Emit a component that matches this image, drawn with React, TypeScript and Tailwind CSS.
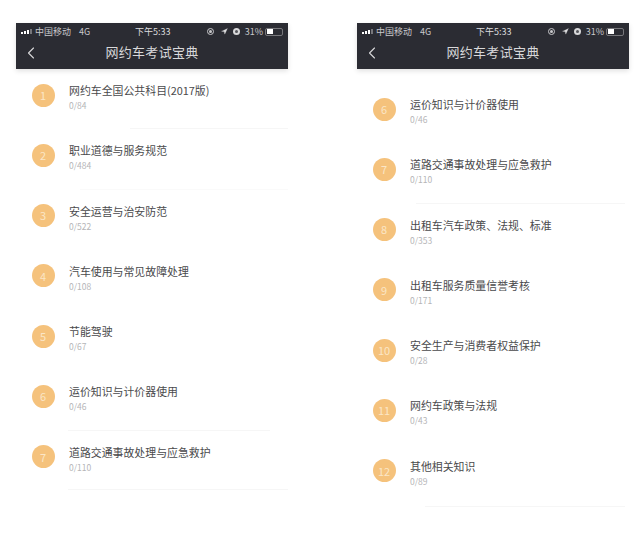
import { ChevronLeft, Navigation } from "lucide-react";

type Item = { no: number; title: string; count: string; divider?: string };

const leftItems: Item[] = [
  { no: 1, title: "网约车全国公共科目(2017版)", count: "0/84", divider: "left-[114px] bottom-[13px]" },
  { no: 2, title: "职业道德与服务规范", count: "0/484", divider: "left-[64px] bottom-[13px] opacity-60" },
  { no: 3, title: "安全运营与治安防范", count: "0/522" },
  { no: 4, title: "汽车使用与常见故障处理", count: "0/108" },
  { no: 5, title: "节能驾驶", count: "0/67" },
  { no: 6, title: "运价知识与计价器使用", count: "0/46", divider: "left-[52px] right-[18px] bottom-[13px]" },
  { no: 7, title: "道路交通事故处理与应急救护", count: "0/110", divider: "left-[52px] bottom-[14px]" },
];

const rightItems: Item[] = [
  { no: 6, title: "运价知识与计价器使用", count: "0/46" },
  { no: 7, title: "道路交通事故处理与应急救护", count: "0/110", divider: "left-[59px] right-[4px] bottom-[13px]" },
  { no: 8, title: "出租车汽车政策、法规、标准", count: "0/353" },
  { no: 9, title: "出租车服务质量信誉考核", count: "0/171" },
  { no: 10, title: "安全生产与消费者权益保护", count: "0/28" },
  { no: 11, title: "网约车政策与法规", count: "0/43" },
  { no: 12, title: "其他相关知识", count: "0/89", divider: "left-[68px] right-[4px] bottom-[11px]" },
];

const StatusBar = () => (
  <div className="relative flex h-[15px] items-center justify-between px-[5px] pt-[2px] text-[9px] leading-none text-[#c9c9cc]">
    <div className="flex items-center gap-[6px]">
      <div className="flex items-end gap-[1px]">
        <div className="h-[2px] w-[2px] bg-white"></div>
        <div className="h-[3px] w-[2px] bg-white"></div>
        <div className="h-[4px] w-[2px] bg-white"></div>
        <div className="h-[5px] w-[2px] bg-[#77777b]"></div>
      </div>
      <span className="-ml-[3px]">中国移动</span>
      <span className="ml-[2px]">4G</span>
    </div>
    <span className="absolute left-[119px] text-[#dddddf]">下午5:33</span>
    <div className="flex items-center">
      <div className="flex h-[7px] w-[7px] items-center justify-center rounded-full border border-[#c9c9cc]">
        <div className="h-[3px] w-[3px] rounded-full bg-[#c9c9cc]"></div>
      </div>
      <Navigation size={7} fill="#e0e0e2" strokeWidth={1} className="ml-[7px]" />
      <div className="ml-[5px] flex h-[7px] w-[7px] items-center justify-center rounded-full bg-[#d8d8da]">
        <div className="h-[3px] w-[3px] rounded-full bg-[#55565c]"></div>
      </div>
      <span className="ml-[5px]">31%</span>
      <div className="ml-[2px] flex h-[8px] w-[18px] items-center rounded-[2px] border border-[#77777b] px-[1px]">
        <div className="h-[5px] w-[6px] bg-white"></div>
      </div>
    </div>
  </div>
);

const Row = ({ item }: { item: Item }) => (
  <div className="relative flex h-[60.3px] shrink-0 items-start pl-[15.5px]">
    <div className="mt-[1.5px] flex h-[23px] w-[23px] shrink-0 items-center justify-center rounded-full bg-[#f5c27c] text-[11px] text-[#fbe6c6]">
      {item.no}
    </div>
    <div className="ml-[14.5px] flex flex-col">
      <div className="text-[10.9px] leading-4 text-[#4a4a4c]">{item.title}</div>
      <div className="text-[8.5px] leading-[14px] text-[#b5b5b7]">{item.count}</div>
    </div>
    {item.divider && <div className={`absolute right-0 h-px bg-[#f6f6f6] ${item.divider}`}></div>}
  </div>
);

const Phone = ({ items, topGap }: { items: Item[]; topGap: string }) => (
  <div className="w-[272px] shrink-0">
    <div className="h-[46px] bg-[#2b2c33] shadow-[0_2px_5px_rgba(0,0,0,0.12)]">
      <StatusBar />
      <div className="relative flex h-[31px] items-center justify-center pb-[3px] text-[13px] tracking-[0.3px] text-[#d8d8da]">
        <ChevronLeft size={20} strokeWidth={1.3} className="absolute left-[5px] top-[5px] text-[#d8d8da]" />
        网约车考试宝典
      </div>
    </div>
    <div className={`flex flex-col ${topGap}`}>
      {items.map((item) => (
        <Row key={item.no} item={item} />
      ))}
    </div>
  </div>
);

export default function App() {
  return (
    <div
      className="flex h-[547px] w-[640px] gap-[69px] overflow-hidden bg-white pl-[16px] pt-[23px]"
      style={{ fontFamily: '"Noto Sans CJK SC", "Liberation Sans", sans-serif' }}
    >
      <Phone items={leftItems} topGap="pt-[13px]" />
      <Phone items={rightItems} topGap="pt-[27px]" />
    </div>
  );
}
